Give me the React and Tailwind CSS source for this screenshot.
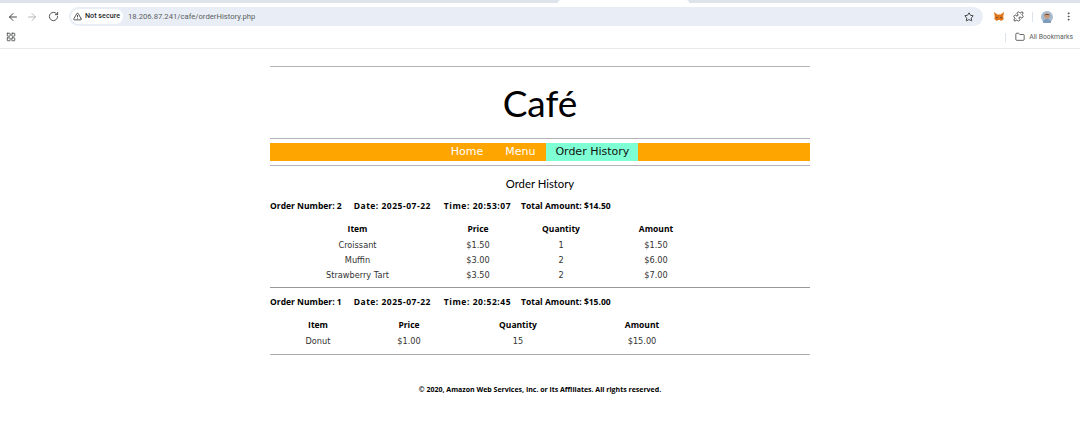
import { ArrowLeft, ArrowRight, RotateCw, TriangleAlert, Star, Puzzle, EllipsisVertical, LayoutGrid, Folder } from 'lucide-react';

const orders = [
  {
    number: 2,
    date: '2025-07-22',
    time: '20:53:07',
    total: '$14.50',
    cols: 'grid-cols-[175px_66px_100px_90px]',
    gap: 'mt-[10px]',
    items: [
      ['Croissant', '$1.50', '1', '$1.50'],
      ['Muffin', '$3.00', '2', '$6.00'],
      ['Strawberry Tart', '$3.50', '2', '$7.00'],
    ],
  },
  {
    number: 1,
    date: '2025-07-22',
    time: '20:52:45',
    total: '$15.00',
    cols: 'grid-cols-[96px_86px_132px_116px]',
    gap: 'mt-[10px]',
    items: [['Donut', '$1.00', '15', '$15.00']],
  },
];

function BrowserBar() {
  return (
    <div className="font-['Roboto',sans-serif] text-[#444746]">
      <div className="flex h-[3px] bg-[#dfe4ec]">
        <div className="w-[558px]" />
        <div className="w-[131px] bg-white rounded-t-md" />
      </div>
      <div className="h-[4px] bg-white" />
      <div className="h-[19px] bg-white flex items-center">
        <div className="flex items-center gap-[7px] pl-[7px] w-[68px]">
          <ArrowLeft size={12} />
          <ArrowRight size={12} className="text-[#b4b7bb]" />
          <RotateCw size={11} className="ml-[3px]" />
        </div>
        <div className="flex-1 h-[19px] bg-[#e9eef6] rounded-full flex items-center pl-[2px] ml-px">
          <div className="h-[15px] bg-white rounded-full flex items-center gap-[3px] pl-[2px] pr-[3px] text-[7.200px] font-medium text-[#1f1f1f]">
            <TriangleAlert size={9} />
            Not secure
          </div>
          <span className="ml-[5px] text-[7.700px] text-[#5a5d60]">18.206.87.241/cafe/orderHistory.php</span>
          <Star size={10} className="ml-auto mr-[9px] text-[#1f1f1f]" />
        </div>
        <div className="flex items-center w-[97px] pl-[10px]">
          <svg width="12" height="11" viewBox="0 0 12 11">
            <path d="M1 1l3.500 2.500h3L11 1l-.8 5 .6 2-2.500 2-1.600-1H5.300l-1.600 1-2.500-2 .6-2z" fill="#e2761b" />
            <path d="M3 6l2 .5-1 1zM9 6l-2 .5 1 1z" fill="#233447" />
          </svg>
          <Puzzle size={11} className="ml-[8px]" />
          <div className="w-px h-[10px] bg-[#dde3ea] ml-[8px]" />
          <svg width="12" height="12" viewBox="0 0 12 12" className="ml-[8px]">
            <circle cx="6" cy="6" r="6" fill="#a9bccd" />
            <path d="M2 12c0-3 1.500-4 4-4s4 1 4 4z" fill="#7f9bbb" />
            <circle cx="6" cy="5" r="2.800" fill="#c39a7c" />
            <path d="M3.200 4.500C3.500 2.500 8.500 2.500 8.800 4.500 7.500 3.500 4.500 3.500 3.200 4.500z" fill="#5b4334" />
          </svg>
          <EllipsisVertical size={11} className="ml-[10px]" />
        </div>
      </div>
      <div className="h-[23px] bg-white border-b border-[#e6e8eb] flex items-center justify-between pl-[6px] pr-[7px]">
        <LayoutGrid size={10} />
        <div className="flex items-center text-[6.800px] text-[#5a5d60]">
          <div className="w-px h-[9px] bg-[#dde3ea] mr-[9px]" />
          <Folder size={10} className="mr-[4px] text-[#444746]" />
          All Bookmarks
        </div>
      </div>
    </div>
  );
}

function Order({ order }) {
  return (
    <section>
      <p className="font-['Open_Sans',sans-serif] text-[8.500px] font-bold text-black flex leading-[11px]">
        <span>Order Number: {order.number}</span>
        <span className="ml-[12px] tracking-[0.5px]">Date: {order.date}</span>
        <span className="ml-[13px] tracking-[0.55px]">Time: {order.time}</span>
        <span className="ml-[10px]">Total Amount: {order.total}</span>
      </p>
      <div className={`grid w-fit text-center text-[8.200px] leading-[15px] text-[#333] ${order.cols} ${order.gap}`}>
        {['Item', 'Price', 'Quantity', 'Amount'].map((h) => (
          <div key={h} className="pb-[2px] font-['Open_Sans',sans-serif] text-[8.500px] font-bold text-black">{h}</div>
        ))}
        {order.items.flat().map((cell, i) => (
          <div key={i}>{cell}</div>
        ))}
      </div>
    </section>
  );
}

export default function App() {
  return (
    <div className="w-[1080px] h-[424px] bg-white overflow-hidden font-['DejaVu_Sans',sans-serif]">
      <BrowserBar />
      <main className="w-[540px] mx-auto pt-[17px]">
        <hr className="border-[#b5b5b5]" />
        <h1 className="text-center text-[37px] leading-[71px] text-black font-['Lato',sans-serif]">Café</h1>
        <hr className="border-[#b5b5b5]" />
        <nav className="mt-1 h-[18px] bg-[#ffa500] flex justify-center text-[11px] leading-[18px] text-white">
          <a className="px-[9px]">Home</a>
          <a className="px-[9px] ml-[4px]">Menu</a>
          <a className="px-[9px] ml-[2px] bg-[#7fffd4] text-[#111]">Order History</a>
        </nav>
        <hr className="mt-1 border-[#b5b5b5]" />
        <h2 className="text-center mt-[11px] text-[11.300px] leading-[13px] text-black font-['Lato',sans-serif]">Order History</h2>
        <div className="mt-[10px]">
          <Order order={orders[0]} />
        </div>
        <hr className="mt-[4px] border-[#999]" />
        <div className="mt-[8px]">
          <Order order={orders[1]} />
        </div>
        <hr className="mt-[5px] border-[#aaa]" />
        <p className="mt-[30px] text-center font-['Open_Sans',sans-serif] text-[7px] font-bold text-black leading-[10px]">
          © 2020, Amazon Web Services, Inc. or its Affiliates. All rights reserved.
        </p>
      </main>
    </div>
  );
}
